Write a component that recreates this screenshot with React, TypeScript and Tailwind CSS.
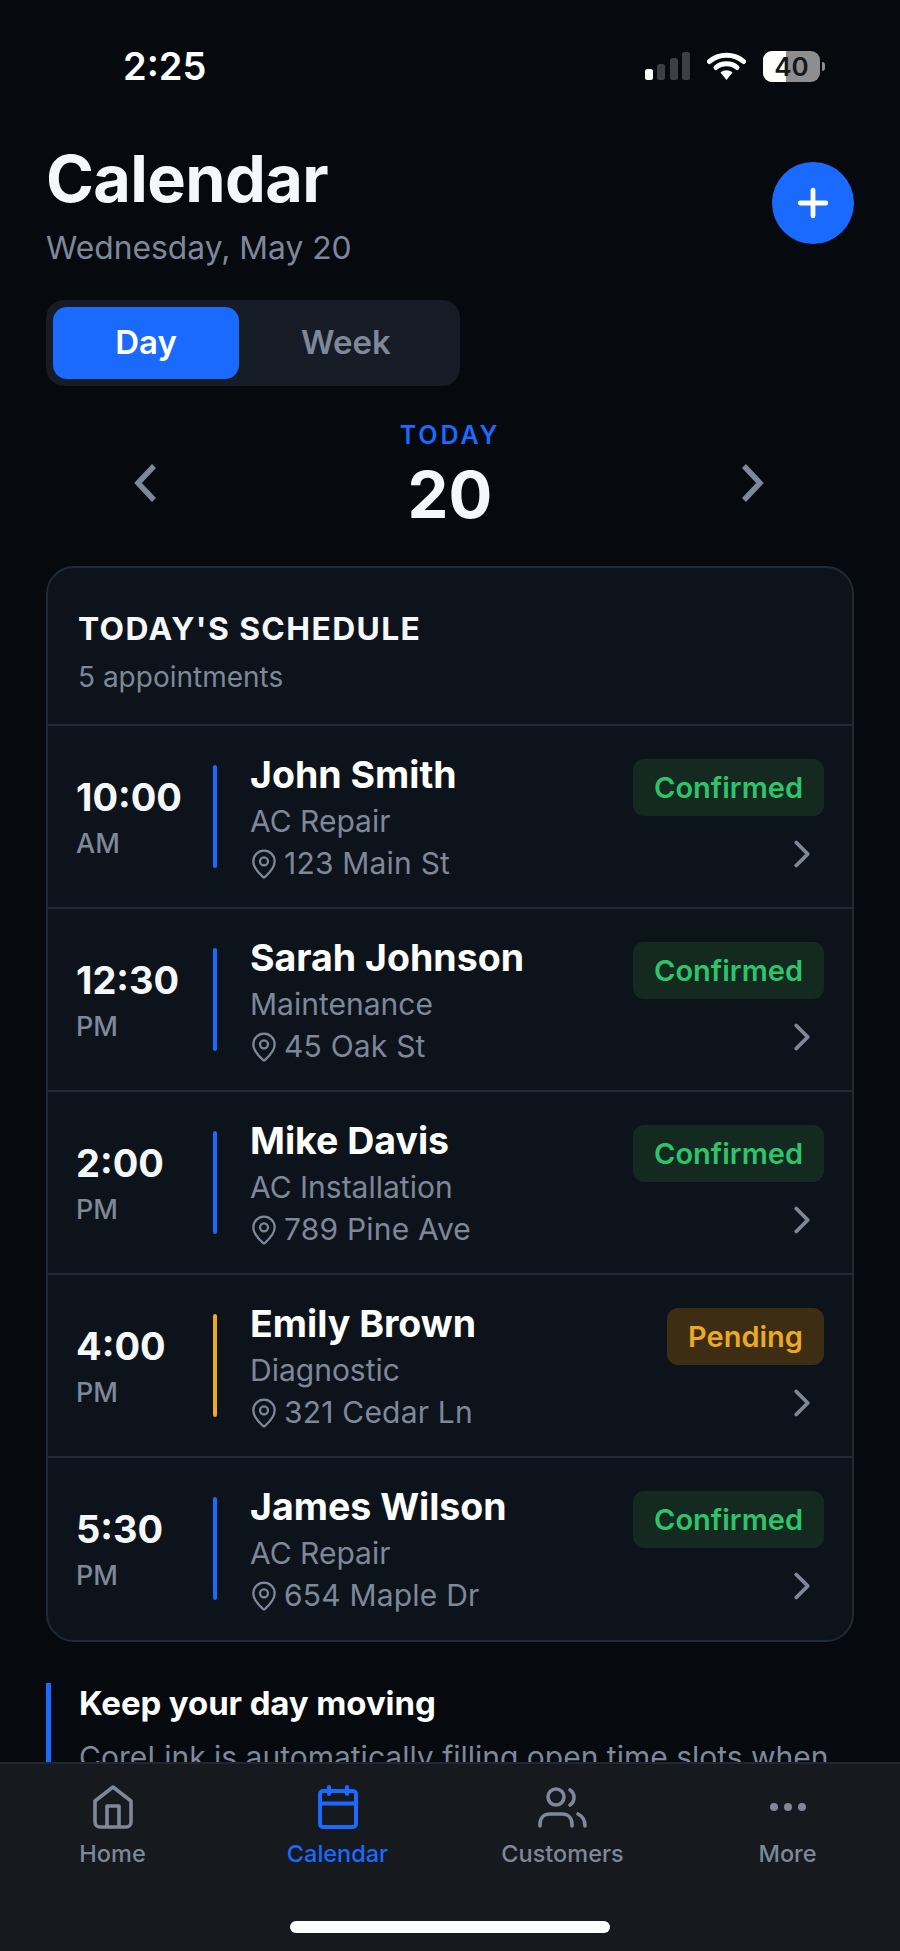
import { ChevronRight, MapPin, Plus } from "lucide-react";

const rows = [
  { t: "10:00", p: "AM", n: "John Smith", s: "AC Repair", a: "123 Main St", st: "Confirmed" },
  { t: "12:30", p: "PM", n: "Sarah Johnson", s: "Maintenance", a: "45 Oak St", st: "Confirmed" },
  { t: "2:00", p: "PM", n: "Mike Davis", s: "AC Installation", a: "789 Pine Ave", st: "Confirmed" },
  { t: "4:00", p: "PM", n: "Emily Brown", s: "Diagnostic", a: "321 Cedar Ln", st: "Pending" },
  { t: "5:30", p: "PM", n: "James Wilson", s: "AC Repair", a: "654 Maple Dr", st: "Confirmed" },
];

function Row({ r }: { r: (typeof rows)[number] }) {
  const pending = r.st === "Pending";
  return (
    <div className="flex h-[183px] border-t-2 border-[#1f2937] pl-[28px] pr-[28px]">
      <div className="w-[130px] shrink-0 pt-[47px]">
        <div className="text-[38px] leading-[48px] font-bold text-[#f5f7fa]">{r.t}</div>
        <div className="text-[27px] leading-[34px] font-medium text-[#7d8899] mt-[6px]">{r.p}</div>
      </div>
      <div className={`w-1 h-[103px] mt-[39px] ml-[7px] rounded-full ${pending ? "bg-[#eba926]" : "bg-[#1a6aff]"}`} />
      <div className="flex-1 pl-[33px] pt-[26px]">
        <div className="text-[37.5px] leading-[46px] font-bold text-white">{r.n}</div>
        <div className="text-[30px] leading-[38px] text-[#7d8899] mt-[4px]">{r.s}</div>
        <div className="flex items-center text-[30px] leading-[38px] tracking-[0.2px] text-[#7d8899] mt-[4px]">
          <MapPin size={32} strokeWidth={1.7} className="-ml-[2px] mr-[4px] mt-[1px]" />
          {r.a}
        </div>
      </div>
      <div className="flex flex-col items-end pt-[33px]">
        <div className={`h-[57px] px-[21px] flex items-center rounded-[11px] text-[29px] font-semibold ${pending ? "bg-[#3d2d13] text-[#eba926]" : "bg-[#14291f] text-[#2ec46a]"}`}>
          {r.st}
        </div>
        <ChevronRight size={46} strokeWidth={2} className="text-[#7d8899] mt-[15px] -mr-[1px]" />
      </div>
    </div>
  );
}

function Nav({ label, active, children }: { label: string; active?: boolean; children: React.ReactNode }) {
  return (
    <div className={`flex-1 flex flex-col items-center pt-[21px] ${active ? "text-[#1a6aff]" : "text-[#7d8899]"}`}>
      <div className="h-[46px] flex items-start">{children}</div>
      <div className="text-[23.5px] leading-[30px] font-medium mt-[8px]">{label}</div>
    </div>
  );
}

export default function App() {
  return (
    <div className="w-[900px] h-[1951px] flex flex-col overflow-hidden bg-[#06090e] font-['Inter',sans-serif]">
      <div className="flex-1 min-h-0 overflow-hidden">
        <div className="flex justify-between h-[144px] pl-[123px] pr-[75px] pt-[44px]">
          <div className="text-[38px] leading-[44px] font-semibold text-white">2:25</div>
          <div className="flex items-center h-[44px]">
            <svg width="45" height="28" viewBox="0 0 45 28">
              <rect x="0" y="17" width="8" height="11" rx="2.5" fill="#fff" />
              <rect x="12" y="12" width="8" height="16" rx="2.5" fill="#3c4045" />
              <rect x="25" y="6" width="8" height="22" rx="2.5" fill="#3c4045" />
              <rect x="37" y="0" width="8" height="28" rx="2.5" fill="#3c4045" />
            </svg>
            <svg width="39" height="28" viewBox="0 0 38 28" className="ml-[17px]">
              <path d="M2 9.5C11 1 27 1 36 9.5" fill="none" stroke="#fff" strokeWidth="5" strokeLinecap="round" />
              <path d="M8.5 15.5C14 10.5 24 10.5 29.5 15.5" fill="none" stroke="#fff" strokeWidth="5" strokeLinecap="round" />
              <path d="M13 20.5C16.5 17.5 21.5 17.5 25 20.5L19 28Z" fill="#fff" />
            </svg>
            <div className="relative flex ml-[17px] w-[57px] h-[31px] rounded-[9px] overflow-hidden bg-[#8e8e8e]">
              <div className="w-[23px] bg-white" />
              <div className="absolute inset-0 flex items-center justify-center text-[26px] leading-[31px] font-semibold text-[#15171a]">40</div>
            </div>
            <div className="w-[3px] h-[9px] ml-[2px] rounded-r-full bg-[#8e8e8e]" />
          </div>
        </div>
        <div className="flex justify-between items-start px-[46px]">
          <div>
            <div className="text-[64.8px] leading-[76px] font-bold text-[#f5f7fa] tracking-[-0.6px] -mt-[3px]">Calendar</div>
            <div className="text-[31.8px] leading-[40px] text-[#7d8899] mt-[11px]">Wednesday, May 20</div>
          </div>
          <div className="w-[82px] h-[82px] mt-[18px] rounded-full bg-[#1a6aff] flex items-center justify-center">
            <Plus size={44} strokeWidth={2.6} className="text-white" />
          </div>
        </div>
        <div className="mx-[46px] mt-[32px] w-[414px] h-[86px] rounded-[18px] bg-[#151c25] p-[7px] flex">
          <div className="w-[186px] rounded-[14px] bg-[#1a6aff] text-white text-[33px] font-semibold flex items-center justify-center">Day</div>
          <div className="flex-1 text-[#7d8899] text-[33px] font-semibold flex items-center justify-center">Week</div>
        </div>
        <div className="relative h-[180px] flex flex-col items-center">
          <div className="text-[25px] leading-[30px] font-semibold tracking-[2.9px] text-[#1a6aff] mt-[34px]">TODAY</div>
          <div className="text-[65px] leading-[76px] font-bold text-[#f5f7fa] mt-[7px]">20</div>
          <svg width="26" height="38" viewBox="0 0 26 38" fill="none" stroke="#7d8899" strokeWidth="5.5" className="absolute left-[132px] top-[78px]">
            <path d="M22 2 L6 19 L22 36" />
          </svg>
          <svg width="26" height="38" viewBox="0 0 26 38" fill="none" stroke="#7d8899" strokeWidth="5.5" className="absolute right-[134px] top-[78px]">
            <path d="M4 2 L20 19 L4 36" />
          </svg>
        </div>
        <div className="mx-[46px] w-[808px] h-[1076px] rounded-[28px] border-2 border-[#1f2937] bg-[#0d131b] overflow-hidden">
          <div className="h-[156px] pl-[30px] pt-[41px]">
            <div className="text-[31.8px] leading-[40px] font-bold tracking-[1.4px] text-[#f5f7fa]">TODAY'S SCHEDULE</div>
            <div className="text-[28px] leading-[34px] text-[#7d8899] mt-[11px]">5 appointments</div>
          </div>
          {rows.map((r) => <Row key={r.t} r={r} />)}
        </div>
        <div className="mt-[41px] mx-[46px] border-l-[5px] border-[#1a6aff] pl-[28px] h-[120px]">
          <div className="text-[33px] leading-[40px] font-bold tracking-[-0.1px] text-white">Keep your day moving</div>
          <div className="text-[30px] leading-[40px] text-[#7d8899] mt-[14px] whitespace-nowrap">CoreLink is automatically filling open time slots when</div>
        </div>
      </div>
      <div className="shrink-0 relative h-[189px] border-t-2 border-[#1f2731] bg-[#16191d] flex">
        <Nav label="Home">
          <svg width="40" height="44" viewBox="0 0 40 44" fill="none" stroke="currentColor" strokeWidth="3.6" strokeLinejoin="round">
            <path d="M20 2 L38 16 V37 a5 5 0 0 1 -5 5 H7 a5 5 0 0 1 -5 -5 V16 Z" />
            <path d="M14 42 V21 H26 V42" />
          </svg>
        </Nav>
        <Nav label="Calendar" active>
          <svg width="40" height="44" viewBox="0 0 40 44" fill="none" stroke="currentColor" strokeWidth="4" strokeLinecap="round" strokeLinejoin="round">
            <rect x="2" y="6" width="36" height="36" rx="3" />
            <path d="M2 18.5h36M11 2v7M29 2v7" />
          </svg>
        </Nav>
        <Nav label="Customers">
          <svg width="50" height="42" viewBox="0 0 50 42" fill="none" stroke="currentColor" strokeWidth="3.6" strokeLinecap="round" className="mt-[2px]">
            <circle cx="18" cy="10" r="8" />
            <path d="M32 3 A 9 9 0 0 1 32 18" />
            <path d="M2 39 V37 C2 31 6 27 12 27 H24 C30 27 34 31 34 37 V39" />
            <path d="M40 27 C44 29 47 33 47 39" />
          </svg>
        </Nav>
        <Nav label="More">
          <svg width="38" height="10" viewBox="0 0 38 10" fill="currentColor" className="mt-[17px]">
            <circle cx="5" cy="5" r="4" />
            <circle cx="19" cy="5" r="4" />
            <circle cx="33" cy="5" r="4" />
          </svg>
        </Nav>
        <div className="absolute left-[290px] top-[157px] w-[320px] h-[12px] rounded-full bg-white" />
      </div>
    </div>
  );
}
